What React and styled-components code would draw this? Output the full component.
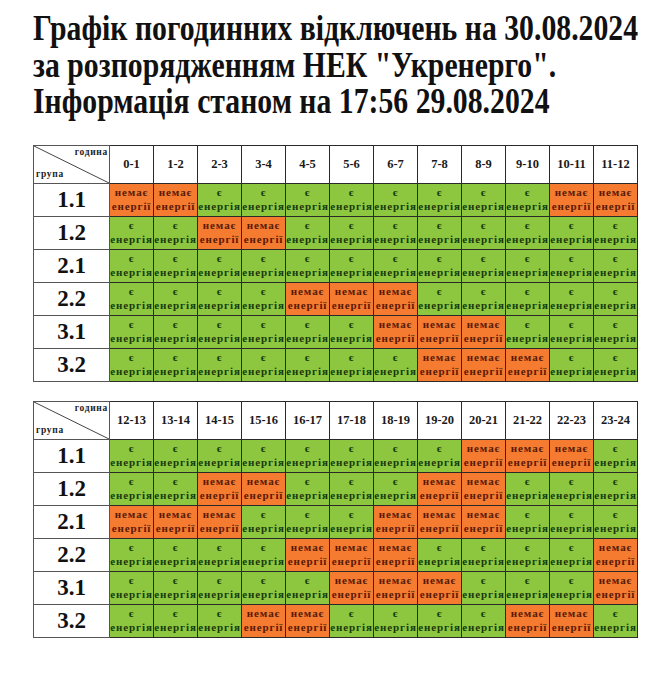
import styled, {createGlobalStyle} from "styled-components";

const hoursA = ["0-1", "1-2", "2-3", "3-4", "4-5", "5-6", "6-7", "7-8", "8-9", "9-10", "10-11", "11-12"];
const hoursB = ["12-13", "13-14", "14-15", "15-16", "16-17", "17-18", "18-19", "19-20", "20-21", "21-22", "22-23", "23-24"];

// 1 = немає енергії, 0 = є енергія
const scheduleA = [
  ["1.1", "110000000011"],
  ["1.2", "001100000000"],
  ["2.1", "000000000000"],
  ["2.2", "000011100000"],
  ["3.1", "000000111000"],
  ["3.2", "000000011100"],
];

const scheduleB = [
  ["1.1", "000000001110"],
  ["1.2", "001100011000"],
  ["2.1", "111000111000"],
  ["2.2", "000011100001"],
  ["3.1", "000001110001"],
  ["3.2", "000110000110"],
];

const GlobalStyle = createGlobalStyle`
  html, body {
    margin: 0;
    background: #fff;
  }
  body {
    font-family: "Liberation Serif", "Times New Roman", serif;
    color: #111;
  }
`;

const Page = styled.div`
  width: 672px;
  padding: 11px 0 0 33px;
  box-sizing: border-box;
`;

const Title = styled.h1`
  margin: 0 0 24px;
  font-size: 35px;
  line-height: 36.5px;
  font-weight: bold;
  color: #111;
`;

const TitleLine = styled.span`
  display: block;
  white-space: nowrap;
  transform: scaleX(0.85);
  transform-origin: left center;
`;

const Schedule = styled.table`
  width: 605px;
  table-layout: fixed;
  border-collapse: collapse;
  margin-bottom: 19px;
  border: 1px solid #555;
`;

const HeadRow = styled.tr`
  height: 38px;
`;

const BodyRow = styled.tr`
  height: 33px;
`;

const Cell = styled.td`
  border: 1px solid #2a2a2a;
  padding: 0;
  text-align: center;
  vertical-align: middle;
  font-weight: bold;
`;

const CornerCell = styled(Cell)`
  position: relative;
  background: #fff;
  border-color: #555;
`;

const Diagonal = styled.svg`
  position: absolute;
  inset: 0;
  width: 100%;
  height: 100%;
`;

const CornerLabel = styled.span`
  position: absolute;
  font-size: 9.5px;
  letter-spacing: 0.7px;
  color: #222;
  ${p => p.$top ? "top: 1px; right: 1px;" : "bottom: 4px; left: 2px;"}
`;

const HourCell = styled(Cell)`
  background: #fff;
  font-size: 12.5px;
  color: #1a1a1a;
`;

const GroupCell = styled(Cell)`
  background: #fff;
  font-size: 23px;
  color: #111;
  border-color: #555;
`;

const SlotCell = styled(Cell)`
  background: ${p => p.$off ? "#f47b30" : "#8dc63f"};
  color: ${p => p.$off ? "#5a1806" : "#173a0c"};
  font-size: 11px;
  line-height: 13.5px;
  letter-spacing: 0.9px;
  white-space: nowrap;
`;

const SlotLine = styled.span`
  display: block;
`;

const Slot = ({off}) => (
  <SlotCell $off={off}>
    <SlotLine>{off ? "немає" : "є"}</SlotLine>
    <SlotLine>{off ? "енергії" : "енергія"}</SlotLine>
  </SlotCell>
);

const HoursTable = ({hours, rows}) => (
  <Schedule>
    <colgroup>
      <col style={{width: 76}} />
      {hours.map(h => <col key={h} style={{width: 44}} />)}
    </colgroup>
    <tbody>
      <HeadRow>
        <CornerCell>
          <Diagonal viewBox="0 0 100 100" preserveAspectRatio="none">
            <line x1="0" y1="0" x2="100" y2="100" stroke="#444" strokeWidth="1" vectorEffect="non-scaling-stroke" />
          </Diagonal>
          <CornerLabel $top>година</CornerLabel>
          <CornerLabel>група</CornerLabel>
        </CornerCell>
        {hours.map(h => <HourCell key={h}>{h}</HourCell>)}
      </HeadRow>
      {rows.map(([group, slots]) => (
        <BodyRow key={group}>
          <GroupCell>{group}</GroupCell>
          {slots.split("").map((s, i) => <Slot key={i} off={s === "1"} />)}
        </BodyRow>
      ))}
    </tbody>
  </Schedule>
);

const App = () => (
  <Page>
    <GlobalStyle />
    <Title>
      <TitleLine>Графік погодинних відключень на 30.08.2024</TitleLine>
      <TitleLine>за розпорядженням НЕК "Укренерго".</TitleLine>
      <TitleLine>Інформація станом на 17:56 29.08.2024</TitleLine>
    </Title>
    <HoursTable hours={hoursA} rows={scheduleA} />
    <HoursTable hours={hoursB} rows={scheduleB} />
  </Page>
);

export default App;
